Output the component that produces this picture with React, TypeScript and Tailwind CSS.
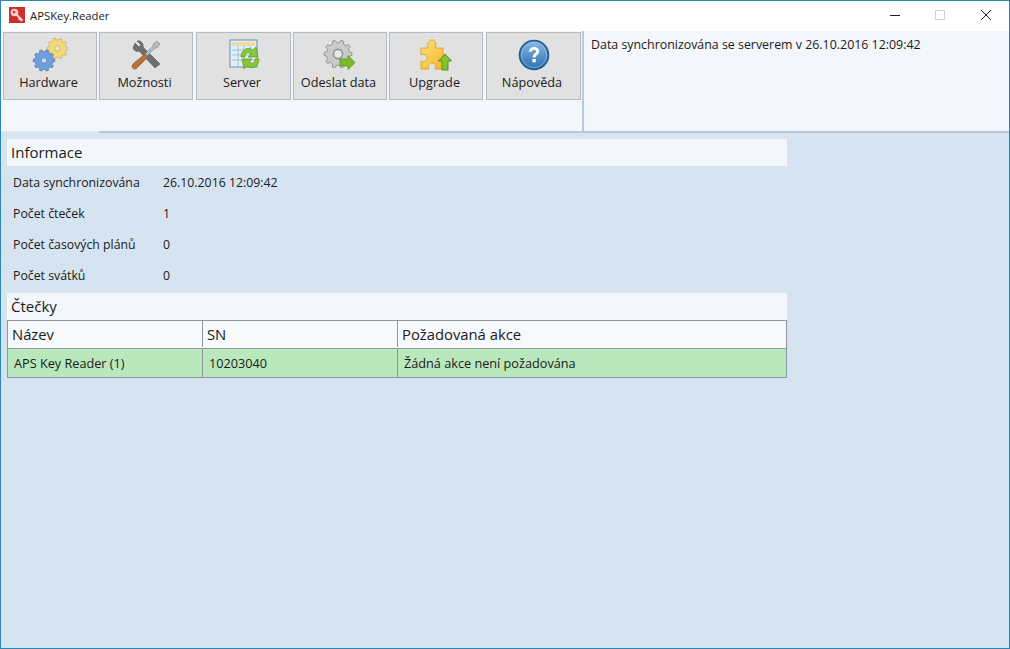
import React from "react";

// gear outline, used by Hardware and Odeslat data
const gearPath = (cx: number, cy: number, outer: number, inner: number, teeth: number) => {
  const pts: string[] = [];
  const step = (Math.PI * 2) / teeth;
  for (let i = 0; i < teeth; i++) {
    const a = i * step;
    const list: [number, number][] = [
      [a - step * 0.3, inner],
      [a - step * 0.17, outer],
      [a + step * 0.17, outer],
      [a + step * 0.3, inner],
    ];
    list.forEach(([ang, r]) => {
      pts.push(`${(cx + Math.cos(ang) * r).toFixed(2)} ${(cy + Math.sin(ang) * r).toFixed(2)}`);
    });
  }
  return "M" + pts.join("L") + "Z";
};

const HardwareIcon = () => (
  <svg width="36" height="36" viewBox="0 0 36 36">
    <path d={gearPath(25.5, 11.5, 10.5, 8.6, 10)} fill="#f5d978" stroke="#c4ad68" strokeWidth="0.8" />
    <circle cx="25.5" cy="11.5" r="2.8" fill="#ece6c8" stroke="#c4ad68" strokeWidth="0.8" />
    <path d={gearPath(12, 23.5, 10.8, 8.8, 10)} fill="#709fe0" stroke="#5678a6" strokeWidth="0.8" />
    <circle cx="12" cy="23.5" r="2.8" fill="#cfdbea" stroke="#5678a6" strokeWidth="0.8" />
  </svg>
);

const ToolsIcon = () => (
  <svg width="32" height="32" viewBox="0 0 32 32">
    <path d="M5 4 L3 9 C4 12 7 13 9 12 L25 29 L30 25 L13 8 C14 5 11 1 7 2 L11 6 L9 8 Z" fill="#6f6f6f" stroke="#555" strokeWidth="0.6" />
    <path d="M27 2 L30 5 L27 9 L25 9 L16 18 L14 16 L23 7 L23 5 Z" fill="#b4babd" stroke="#7d8286" strokeWidth="0.6" />
    <path d="M15 15 L18 18 L7 29 C5 31 2 30 2 27 C2 26 3 25 4 24 Z" fill="#b5733c" stroke="#80502a" strokeWidth="0.6" />
  </svg>
);

const ServerIcon = () => (
  <svg width="32" height="32" viewBox="0 0 32 32">
    <rect x="2" y="1" width="27" height="27" fill="#e2eef8" stroke="#7c9dba" strokeWidth="1.2" />
    <rect x="4" y="3" width="23" height="4" fill="#ecdcaa" />
    <path d="M4 11H27M4 16H27M4 21H27M10 7V27M16 7V27M22 7V27" stroke="#9cc2de" strokeWidth="1" fill="none" />
    <path d="M13 18 C13 11 19 7 25 11 L28 8 L30 18 L20 18 L23 15 C20 12.5 17 14 17 18 Z" fill="#86c934" stroke="#5a9a1e" strokeWidth="0.7" />
    <path d="M31 20 C31 27 25 31 19 27 L16 30 L14 20 L24 20 L21 23 C24 25.5 27 24 27 20 Z" fill="#86c934" stroke="#5a9a1e" strokeWidth="0.7" />
  </svg>
);

const SendIcon = () => (
  <svg width="34" height="32" viewBox="0 0 34 32">
    <path d={gearPath(15, 15, 14, 11.4, 10)} fill="#c8cacc" stroke="#8d9093" strokeWidth="0.9" />
    <circle cx="15" cy="15" r="4.6" fill="#e8e9ea" stroke="#909396" strokeWidth="1.6" />
    <path d="M17 20 H25 V16.5 L32 23.5 L25 30.5 V27 H17 Z" fill="#7cbc2c" stroke="#558f18" strokeWidth="0.8" />
  </svg>
);

const UpgradeIcon = () => (
  <svg width="34" height="33" viewBox="0 0 34 33">
    <defs>
      <linearGradient id="puzzleFill" x1="0" y1="0" x2="1" y2="1">
        <stop offset="0" stopColor="#fde27a" />
        <stop offset="1" stopColor="#f6b42a" />
      </linearGradient>
    </defs>
    <path d="M2 10 H9 C8 7 9 2 13 2 C17 2 18 7 16 10 H24 V17 C26 17 26 24 24 24 V31 H16 C18 27 15 25 13 25 C11 25 8 27 10 31 H2 V23 C5 25 8 23 8 20 C8 17 5 15 2 17 Z" fill="url(#puzzleFill)" stroke="#d6a32a" strokeWidth="0.9" />
    <path d="M26 16 L32.5 23 H29 V32 H23 V23 H19.5 Z" fill="#80c42e" stroke="#4f8a16" strokeWidth="0.9" />
  </svg>
);

const HelpIcon = () => (
  <svg width="32" height="32" viewBox="0 0 32 32">
    <defs>
      <linearGradient id="helpBlue" x1="0" y1="0" x2="0" y2="1">
        <stop offset="0" stopColor="#8ab8e4" />
        <stop offset="1" stopColor="#2a6fb0" />
      </linearGradient>
    </defs>
    <circle cx="16" cy="16" r="14.4" fill="url(#helpBlue)" stroke="#1f5f96" strokeWidth="1.8" />
    <circle cx="16" cy="16" r="12.6" fill="none" stroke="#a9cbea" strokeWidth="0.8" opacity="0.7" />
    <path d="M11 12.5 C11 9.5 13.5 8 16 8 C19 8 21.2 9.8 21.2 12.4 C21.2 15.6 17.6 15.8 17.6 18.6 H14.6 C14.6 14.6 18 14.6 18 12.6 C18 11.4 17.2 10.8 16 10.8 C14.8 10.8 14 11.6 14 12.8 Z" fill="#fff" />
    <rect x="14.4" y="20" width="3.4" height="3.4" fill="#fff" />
  </svg>
);

const AppIcon = () => (
  <svg width="16" height="16" viewBox="0 0 16 16" className="mb-0.5">
    <rect width="16" height="16" fill="#c8322d" />
    <circle cx="5.5" cy="5.5" r="3.8" fill="#f7cfcf" />
    <circle cx="5" cy="5" r="1.3" fill="#c8322d" />
    <path d="M7.5 7.5 L13.5 13.5 M11 11 L9.5 12.5 M12.6 12.6 L11.4 13.8" stroke="#f7cfcf" strokeWidth="2" fill="none" />
  </svg>
);

const toolbar = [
  { label: "Hardware", icon: <HardwareIcon />, cls: "w-[94px]" },
  { label: "Možnosti", icon: <ToolsIcon />, cls: "w-[94px] ml-0.5" },
  { label: "Server", icon: <ServerIcon />, cls: "w-[95px] ml-[3px]" },
  { label: "Odeslat data", icon: <SendIcon />, cls: "w-[94px] ml-0.5" },
  { label: "Upgrade", icon: <UpgradeIcon />, cls: "w-[94px] ml-0.5" },
  { label: "Nápověda", icon: <HelpIcon />, cls: "w-[95px] ml-[3px]" },
];

const infoRows = [
  ["Data synchronizována", "26.10.2016 12:09:42"],
  ["Počet čteček", "1"],
  ["Počet časových plánů", "0"],
  ["Počet svátků", "0"],
];

export default function App() {
  return (
    <div className="w-[1010px] h-[649px] overflow-hidden flex flex-col border border-[#2a86b4] bg-[#d6e4f1] text-[#1a1a1a] font-['Open_Sans','Noto_Sans',sans-serif] text-[12.3px]">
      {/* title bar */}
      <div className="h-[30px] shrink-0 bg-white flex items-center pl-2">
        <AppIcon />
        <span className="ml-[5px] text-[11.3px]">APSKey.Reader</span>
        <div className="ml-auto flex items-center">
          <svg width="46" height="30" viewBox="0 0 46 30">
            <path d="M19 14.5H29" stroke="#222" strokeWidth="1" />
          </svg>
          <svg width="46" height="30" viewBox="0 0 46 30">
            <rect x="18.5" y="9.5" width="9" height="9" fill="none" stroke="#cfcfcf" />
          </svg>
          <svg width="46" height="30" viewBox="0 0 46 30">
            <path d="M18 9L28 19M28 9L18 19" stroke="#222" strokeWidth="1" />
          </svg>
        </div>
      </div>

      {/* ribbon */}
      <div className="h-[102px] shrink-0 flex bg-[#f3f6fb]">
        <div className="w-[583px] shrink-0 flex flex-col border-r-2 border-[#b9c9dc]">
          <div className="flex flex-1 pl-0.5 pt-px">
            {toolbar.map((b) => (
              <div
                key={b.label}
                className={`${b.cls} h-[68px] flex flex-col items-center bg-[#e1e1e1] border border-[#b4bac1]`}
              >
                <div className="h-[35px] mt-1 flex items-center justify-center">{b.icon}</div>
                <span className="mt-px pr-[3px] text-[12.7px] leading-[18px]">{b.label}</span>
              </div>
            ))}
          </div>
          {/* selected tab leaves the line lighter on the left */}
          <div className="h-0.5 flex">
            <div className="w-[98px] bg-[#dde8f3]" />
            <div className="flex-1 bg-[#b9c9dc]" />
          </div>
        </div>
        <div className="flex-1 flex flex-col">
          <div className="flex-1 pl-[7px] pt-1.5 text-[12.4px] leading-[16px]">Data synchronizována se serverem v 26.10.2016 12:09:42</div>
          <div className="h-0.5 bg-[#b9c9dc]" />
        </div>
      </div>

      {/* content */}
      <div className="w-[780px] ml-1.5 mt-1.5 flex flex-col">
        <div className="h-[27px] bg-[#f3f6fb] pl-1 flex items-center text-[15px]">Informace</div>
        <div className="pt-px">
          {infoRows.map(([k, v]) => (
            <div key={k} className="h-[31px] flex items-center pl-1.5 first:h-[32px]">
              <span className="w-[150px]">{k}</span>
              <span>{v}</span>
            </div>
          ))}
        </div>
        <div className="h-[27px] mt-px bg-[#f3f6fb] pl-1 flex items-center text-[15px]">Čtečky</div>
        <div className="border border-[#8f979c]">
          <div className="flex h-[28px] pb-px bg-[#f7f9fc] border-b border-[#8f979c] text-[14.8px]">
            <div className="w-[195px] pl-1 flex items-center border-r border-[#8f979c]">Název</div>
            <div className="w-[195px] pl-1 flex items-center border-r border-[#8f979c]">SN</div>
            <div className="flex-1 pl-1 flex items-center">Požadovaná akce</div>
          </div>
          <div className="flex h-[28px] bg-[#b9e8bc] text-[12.7px]">
            <div className="w-[195px] pl-1.5 pt-0.5 flex items-center border-r border-[#8f979c]">APS Key Reader (1)</div>
            <div className="w-[195px] pl-1.5 pt-0.5 flex items-center border-r border-[#8f979c]">10203040</div>
            <div className="flex-1 pl-1.5 pt-0.5 flex items-center">Žádná akce není požadována</div>
          </div>
        </div>
      </div>
    </div>
  );
}
